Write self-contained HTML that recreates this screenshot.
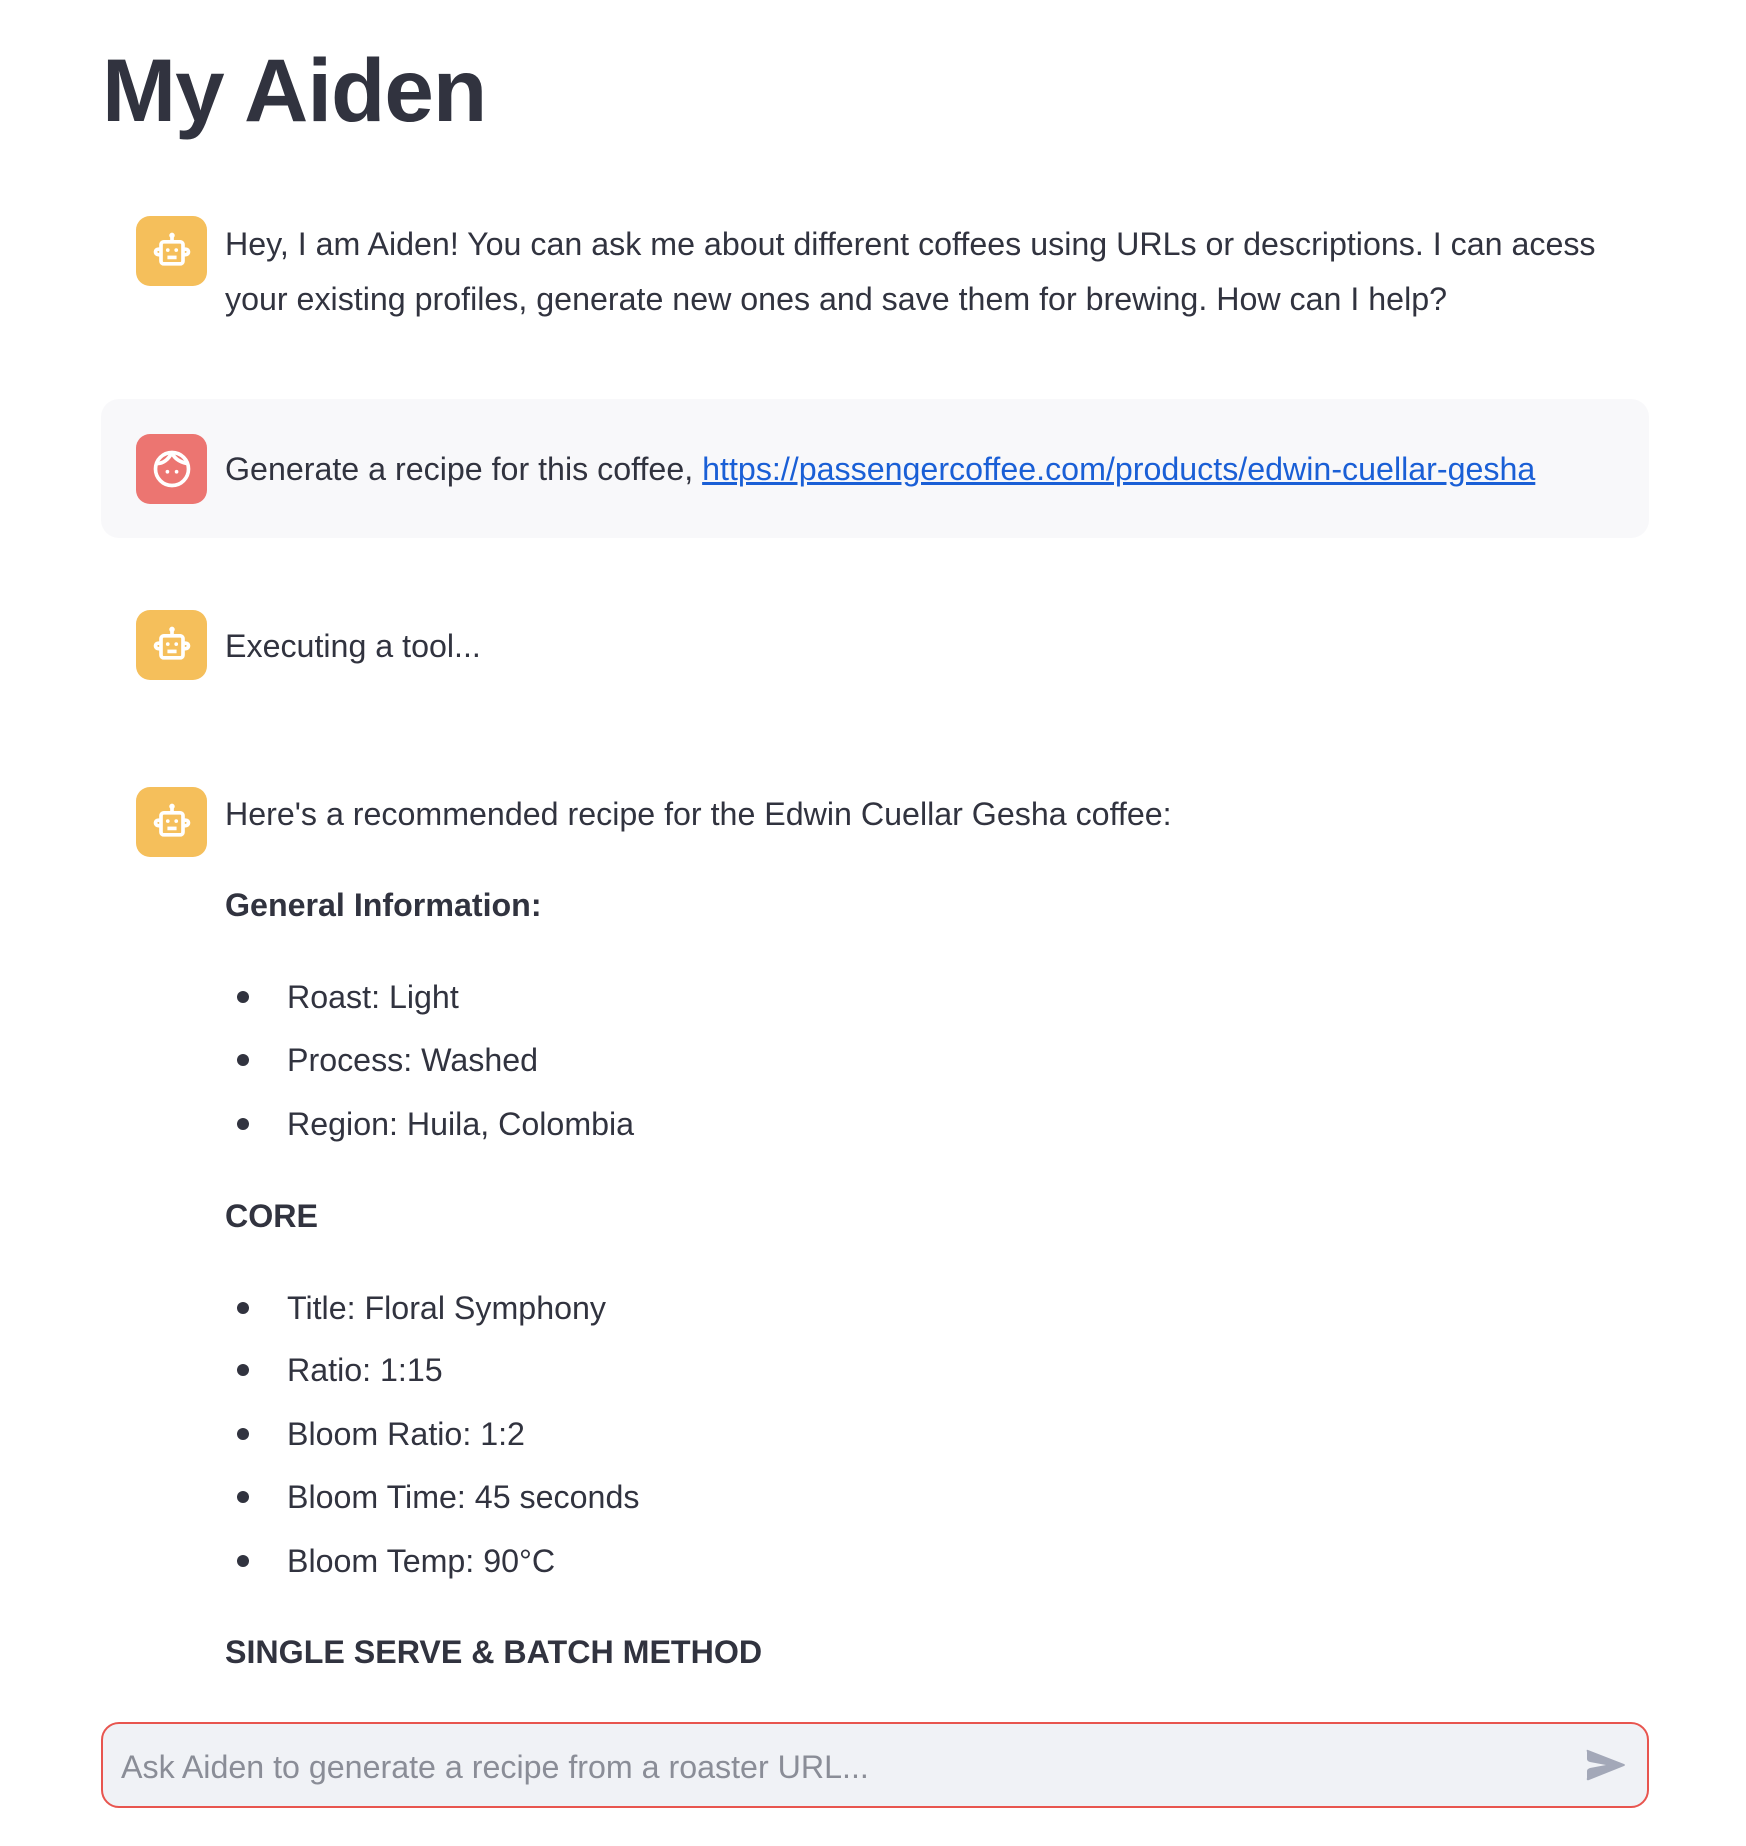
<!DOCTYPE html>
<html><head><meta charset="utf-8"><style>
body{margin:0;width:1746px;height:1846px;background:#fff;font-family:"Liberation Sans",sans-serif;color:#31333f;position:relative;overflow:hidden}
.a{position:absolute;white-space:nowrap}
.t{font-size:32.2px;line-height:40px;height:40px}
.av{position:absolute;left:136px;width:71px;height:70px;border-radius:14px;background:#f5bf5b}
.av svg{position:absolute;left:14px;top:13px}
.b{font-weight:700}
.dot{position:absolute;left:237px;width:12px;height:12px;border-radius:50%;background:#31333f}
</style></head><body>
<div class="a b" style="left:102px;top:40px;font-size:89px;line-height:100px;letter-spacing:-1px">My Aiden</div>

<div class="av" style="top:216px"><svg width="44" height="44" viewBox="0 0 24 24" fill="none" stroke="#fff" stroke-width="2"><rect x="6" y="7" width="12" height="12" rx="1.5"/><circle cx="12" cy="3.5" r="1.5" fill="#fff" stroke="none"/><line x1="12" y1="4" x2="12" y2="7"/><path d="M6 11H4.5a1.5 1.5 0 0 0 0 3H6M18 11h1.5a1.5 1.5 0 0 1 0 3H18"/><circle cx="9.7" cy="11.5" r="1" fill="#fff" stroke="none"/><circle cx="14.3" cy="11.5" r="1" fill="#fff" stroke="none"/><line x1="9.5" y1="15.5" x2="14.5" y2="15.5"/></svg></div>
<div class="a t" style="left:225px;top:224px">Hey, I am Aiden! You can ask me about different coffees using URLs or descriptions. I can acess</div>
<div class="a t" style="left:225px;top:279px">your existing profiles, generate new ones and save them for brewing. How can I help?</div>

<div class="a" style="left:101px;top:399px;width:1548px;height:139px;background:#f8f8fa;border-radius:18px"></div>
<div class="av" style="top:434px;background:#ec7571"><svg width="44" height="44" viewBox="0 0 24 24" fill="none" stroke="#fff" stroke-width="2"><circle cx="12" cy="12" r="9"/><path d="M4 9c3 0 6-2 8-6M12 3c1 3 4 5 8 6"/><circle cx="9.5" cy="13.5" r="1" fill="#fff" stroke="none"/><circle cx="14.5" cy="13.5" r="1" fill="#fff" stroke="none"/></svg></div>
<div class="a t" style="left:225px;top:449px">Generate a recipe for this coffee, <span style="color:#1a5fd6;text-decoration:underline">https://passengercoffee.com/products/edwin-cuellar-gesha</span></div>

<div class="av" style="top:610px"><svg width="44" height="44" viewBox="0 0 24 24" fill="none" stroke="#fff" stroke-width="2"><rect x="6" y="7" width="12" height="12" rx="1.5"/><circle cx="12" cy="3.5" r="1.5" fill="#fff" stroke="none"/><line x1="12" y1="4" x2="12" y2="7"/><path d="M6 11H4.5a1.5 1.5 0 0 0 0 3H6M18 11h1.5a1.5 1.5 0 0 1 0 3H18"/><circle cx="9.7" cy="11.5" r="1" fill="#fff" stroke="none"/><circle cx="14.3" cy="11.5" r="1" fill="#fff" stroke="none"/><line x1="9.5" y1="15.5" x2="14.5" y2="15.5"/></svg></div>
<div class="a t" style="left:225px;top:626px">Executing a tool...</div>

<div class="av" style="top:787px"><svg width="44" height="44" viewBox="0 0 24 24" fill="none" stroke="#fff" stroke-width="2"><rect x="6" y="7" width="12" height="12" rx="1.5"/><circle cx="12" cy="3.5" r="1.5" fill="#fff" stroke="none"/><line x1="12" y1="4" x2="12" y2="7"/><path d="M6 11H4.5a1.5 1.5 0 0 0 0 3H6M18 11h1.5a1.5 1.5 0 0 1 0 3H18"/><circle cx="9.7" cy="11.5" r="1" fill="#fff" stroke="none"/><circle cx="14.3" cy="11.5" r="1" fill="#fff" stroke="none"/><line x1="9.5" y1="15.5" x2="14.5" y2="15.5"/></svg></div>
<div class="a t" style="left:225px;top:794px">Here's a recommended recipe for the Edwin Cuellar Gesha coffee:</div>
<div class="a t b" style="left:225px;top:885px">General Information:</div>
<div class="dot" style="top:991px"></div><div class="a t" style="left:287px;top:977px">Roast: Light</div>
<div class="dot" style="top:1054px"></div><div class="a t" style="left:287px;top:1040px">Process: Washed</div>
<div class="dot" style="top:1118px"></div><div class="a t" style="left:287px;top:1104px">Region: Huila, Colombia</div>
<div class="a t b" style="left:225px;top:1196px">CORE</div>
<div class="dot" style="top:1302px"></div><div class="a t" style="left:287px;top:1288px">Title: Floral Symphony</div>
<div class="dot" style="top:1364px"></div><div class="a t" style="left:287px;top:1350px">Ratio: 1:15</div>
<div class="dot" style="top:1428px"></div><div class="a t" style="left:287px;top:1414px">Bloom Ratio: 1:2</div>
<div class="dot" style="top:1491px"></div><div class="a t" style="left:287px;top:1477px">Bloom Time: 45 seconds</div>
<div class="dot" style="top:1555px"></div><div class="a t" style="left:287px;top:1541px">Bloom Temp: 90°C</div>
<div class="a t b" style="left:225px;top:1632px">SINGLE SERVE &amp; BATCH METHOD</div>

<div class="a" style="left:101px;top:1722px;width:1544px;height:82px;background:#f0f2f6;border:2px solid #e8554f;border-radius:18px"></div>
<div class="a t" style="left:121px;top:1747px;color:#8a8d97">Ask Aiden to generate a recipe from a roaster URL...</div>
<svg class="a" style="left:1584px;top:1746px" width="44" height="38" viewBox="0 0 44 38"><path d="M4 4 Q2 3 3 6 L3 13 Q3 15 6 16 L22 19 L6 22 Q3 23 3 25 L3 32 Q2 35 5 34 L40 20 Q42 19 40 18 Z" fill="#a3a8b8"/></svg>
</body></html>
